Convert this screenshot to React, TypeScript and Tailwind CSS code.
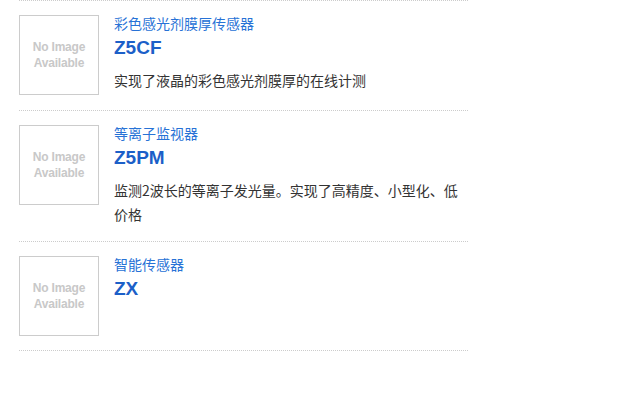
interface Product {
  category: string;
  name: string;
  description?: string;
}

const products: Product[] = [
  { category: "彩色感光剂膜厚传感器", name: "Z5CF", description: "实现了液晶的彩色感光剂膜厚的在线计测" },
  { category: "等离子监视器", name: "Z5PM", description: "监测2波长的等离子发光量。实现了高精度、小型化、低价格" },
  { category: "智能传感器", name: "ZX" },
];

const NoImage = () => (
  <div className="w-[80px] h-[80px] shrink-0 border border-[#cccccc] flex items-center justify-center">
    <p className="text-[12px] leading-[16px] font-bold text-[#c8c8c8] text-center tracking-[-0.2px] font-['Liberation_Sans',Arial,sans-serif]">
      No Image
      <br />
      Available
    </p>
  </div>
);

const ProductRow = ({ category, name, description }: Product) => {
  return (
    <li
      className={
        description
          ? "flex gap-[15px] pt-[14px] pb-[15px] border-b border-dotted border-[#cccccc]"
          : "flex gap-[15px] pt-[14px] pb-[14px] border-b border-dotted border-[#cccccc]"
      }
    >
      <NoImage />
      <div className="flex-1 min-w-0">
        <p className="text-[14px] leading-[17px] text-[#2772d6]">{category}</p>
        <h3 className="mt-[4px] text-[19px] leading-[24px] font-bold text-[#1c5fc8] font-['Liberation_Sans',Arial,sans-serif]">
          {name}
        </h3>
        {description && (
          <p className="mt-[8px] text-[14px] leading-[24px] text-[#333333]">{description}</p>
        )}
      </div>
    </li>
  );
};

export default function App() {
  return (
    <div className="min-h-screen bg-white font-['Noto_Sans_CJK_SC','Noto_Sans',sans-serif]">
      <ul className="ml-[19px] w-[449px] border-t border-dotted border-[#cccccc]">
        {products.map((p) => (
          <ProductRow key={p.name} {...p} />
        ))}
      </ul>
    </div>
  );
}
